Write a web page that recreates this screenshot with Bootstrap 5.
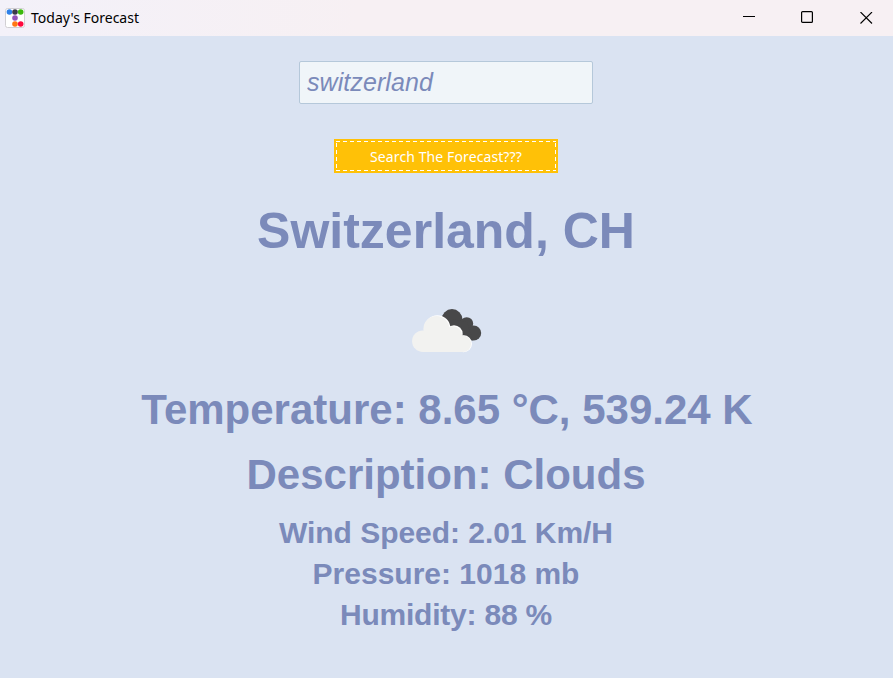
<!DOCTYPE html>
<html lang="en">
<head>
<meta charset="utf-8">
<meta name="viewport" content="width=device-width, initial-scale=1">
<title>Today's Forecast</title>
<link href="https://cdn.jsdelivr.net/npm/bootstrap@5.3.0/dist/css/bootstrap.min.css" rel="stylesheet">
<style>
body { background: #dae3f2; color: #7b8aba; font-family: "Liberation Sans", Arial, sans-serif; height: 678px; overflow: hidden; }
.titlebar { height: 36px; background: linear-gradient(90deg, #f3f1f9, #f7f0f3 40%); color: #000; font: 14px/36px "Noto Sans", sans-serif; padding-left: 5px; }
.app-title { margin-left: 6px; letter-spacing: 0; white-space: nowrap; }
.win-controls { gap: 46px; padding-right: 20px; }
.win-max { margin-bottom: 2px; }
.win-close { margin-left: 1px; }
.panel { padding-right: 1px; }
.city-input { width: 294px; height: 43px; margin-top: 25px; padding: 0 7px; border: 1px solid #b5c8da; border-radius: 2px; background: #f0f5f9; color: #7b8aba; font-size: 25px; font-style: italic; letter-spacing: .08px; }
.city-input:focus { background: #f0f5f9; color: #7b8aba; box-shadow: none; }
.search-btn { width: 224px; height: 34px; margin-top: 35px; padding: 4px 2px 2px; border: 0; background: #ffc107; color: #fff; font: 14px/28px "Noto Sans", sans-serif; letter-spacing: .1px; }
.search-btn svg { inset: 0; }
.place { margin-top: 28px; font-size: 50px; line-height: 60px; }
.weather-icon { height: 124px; padding: 48px 0 0 1px; }
.reading { font-size: 42px; line-height: 50px; }
.temperature { padding-left: 2px; }
.reading + .reading { margin-top: 15px; }
.details { margin-top: 12px; font-size: 30px; line-height: 41px; }
.wind { letter-spacing: -.04px; }
.humidity { letter-spacing: -.22px; }
</style>
</head>
<body>
<header class="titlebar d-flex align-items-center">
  <svg width="20" height="20" viewBox="0 0 20 20">
    <rect x=".5" y=".5" width="19" height="19" rx="2" fill="#fff" stroke="#d1cfd3"/>
    <circle cx="4.4" cy="4" r="2.8" fill="#2e80e8"/><circle cx="10" cy="4" r="2.8" fill="#3b3a49"/><circle cx="15.7" cy="4" r="2.8" fill="#3bb90d"/>
    <circle cx="10" cy="10" r="2.8" fill="#9553ba"/><circle cx="10" cy="16" r="2.8" fill="#ff7614"/><circle cx="15.7" cy="16" r="2.8" fill="#ff083e"/>
  </svg>
  <span class="app-title">Today's Forecast</span>
  <div class="win-controls d-flex align-items-center ms-auto">
    <svg width="12" height="12" viewBox="0 0 12 12"><path d="M0 4.5h12" stroke="#000"/></svg>
    <svg class="win-max" width="12" height="12" viewBox="0 0 12 12"><rect x=".6" y=".6" width="10.8" height="10.8" rx="1" fill="none" stroke="#000" stroke-width="1.2"/></svg>
    <svg class="win-close" width="13" height="12" viewBox="0 0 13 12"><path d="M.5 0l11.5 11.5M12 0L.5 11.5" stroke="#000" stroke-width="1.1"/></svg>
  </div>
</header>
<main class="panel d-flex flex-column align-items-center text-center">
  <input class="form-control city-input" type="text" value="switzerland" aria-label="City">
  <button class="btn search-btn rounded-0 position-relative" type="button">Search The Forecast???
    <svg class="position-absolute" width="224" height="34" viewBox="0 0 224 34"><path d="M2 2.5H222M2 31.5H222M2.5 4V31M221.5 4V31" fill="none" stroke="#fff" stroke-dasharray="4 3"/></svg>
  </button>
  <h1 class="place fw-bold mb-0">Switzerland, CH</h1>
  <div class="weather-icon">
    <svg class="d-block" width="70" height="44" viewBox="0 0 70 44">
      <g fill="#484849"><circle cx="40" cy="10.5" r="10.4"/><circle cx="54.7" cy="14.7" r="6.5"/><circle cx="61.6" cy="24" r="7.6"/><path d="M40 10L55 13L61 31.6L50 30Z"/></g>
      <g fill="#fff"><circle cx="25.4" cy="19.3" r="13"/><circle cx="42" cy="25" r="8.7"/><circle cx="51.5" cy="34.7" r="8.5"/></g>
      <g fill="#f2f2f0"><circle cx="10.9" cy="32.2" r="10.8"/><circle cx="24.4" cy="19.9" r="13"/><circle cx="41" cy="26" r="8.7"/><circle cx="50.8" cy="34.8" r="8.3"/><path d="M11 25H50V43H11Z"/></g>
    </svg>
  </div>
  <h2 class="reading temperature fw-bold mb-0">Temperature: 8.65 °C, 539.24 K</h2>
  <h2 class="reading fw-bold mb-0">Description: Clouds</h2>
  <div class="details fw-bold">
    <div class="wind">Wind Speed: 2.01 Km/H</div>
    <div>Pressure: 1018 mb</div>
    <div class="humidity">Humidity: 88 %</div>
  </div>
</main>
<script src="https://cdn.jsdelivr.net/npm/bootstrap@5.3.0/dist/js/bootstrap.bundle.min.js"></script>
</body>
</html>
